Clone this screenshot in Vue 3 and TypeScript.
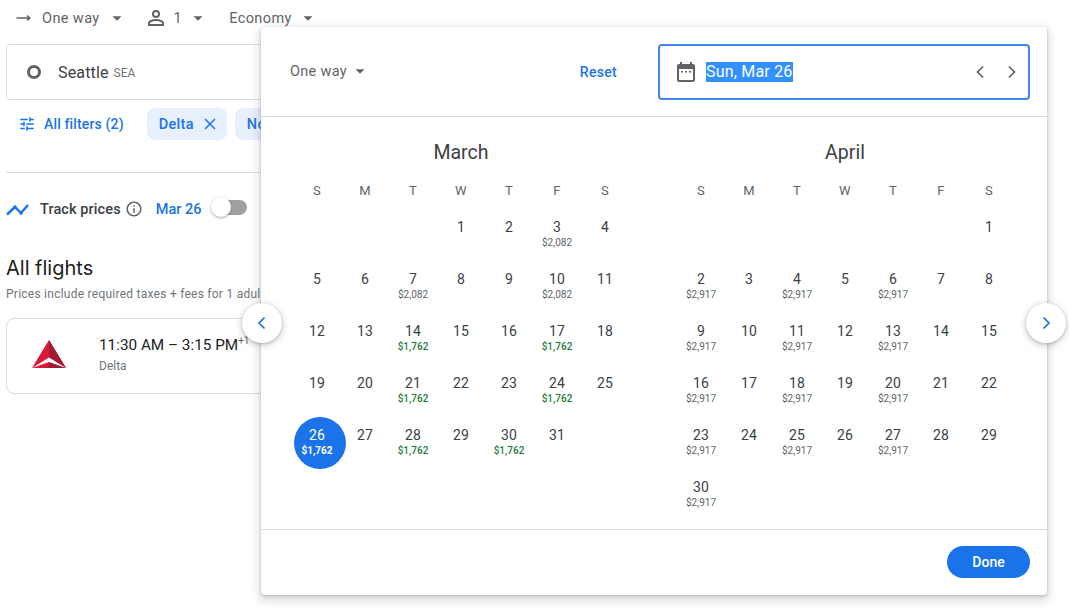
<script setup lang="ts">
interface Day {
  n: number
  price?: string
  low?: boolean
  selected?: boolean
}

interface Month {
  name: string
  offset: number
  days: Day[]
}

const weekdays = ['S', 'M', 'T', 'W', 'T', 'F', 'S']

function buildMonth(name: string, offset: number, total: number, prices: Record<number, string>): Month {
  const days: Day[] = []
  for (let n = 1; n <= total; n++) {
    const price = prices[n]
    days.push({ n, price, low: price === '$1,762', selected: name === 'March' && n === 26 })
  }
  return { name, offset, days }
}

const low = '$1,762'
const mid = '$2,082'
const high = '$2,917'

const months: Month[] = [
  buildMonth('March', 3, 31, {
    3: mid, 7: mid, 10: mid, 14: low, 17: low, 21: low, 24: low, 26: low, 28: low, 30: low,
  }),
  buildMonth('April', 6, 30, {
    2: high, 4: high, 6: high, 9: high, 11: high, 13: high, 16: high, 18: high, 20: high,
    23: high, 25: high, 27: high, 30: high,
  }),
]
</script>

<template>
  <div class="page">
    <div class="topbar">
      <div class="pick first">
        <svg width="16" height="16" viewBox="0 0 16 16" class="arrow">
          <path d="M0.5 8h13M11 5.6 13.8 8 11 10.4" fill="none" stroke="#5f6368" stroke-width="1.5" />
        </svg>
        <span>One way</span>
        <i class="caret"></i>
      </div>
      <div class="pick people">
        <svg width="24" height="24" viewBox="0 0 24 24">
          <path
            fill="#5f6368"
            d="M12 5.900a2.100 2.100 0 1 1 0 4.200 2.100 2.100 0 0 1 0-4.200m0 9c2.970 0 6.100 1.460 6.100 2.100v1.100H5.900V17c0-.64 3.130-2.100 6.100-2.100M12 4a4 4 0 1 0 0 8 4 4 0 0 0 0-8zm0 9c-2.670 0-8 1.340-8 4v3h16v-3c0-2.660-5.330-4-8-4z"
          />
        </svg>
        <span>1</span>
        <i class="caret"></i>
      </div>
      <div class="pick economy">
        <span>Economy</span>
        <i class="caret"></i>
      </div>
    </div>

    <div class="origin">
      <span class="ring"></span>
      <span class="city">Seattle</span>
      <span class="code">SEA</span>
    </div>

    <div class="filters">
      <div class="all-filters">
        <svg width="18" height="18" viewBox="0 0 24 24">
          <path
            fill="#1a73e8"
            d="M3 17v2h6v-2H3zM3 5v2h10V5H3zm10 16v-2h8v-2h-8v-2h-2v6h2zM7 9v2H3v2h4v2h2V9H7zm14 4v-2H11v2h10zm-6-4h2V7h4V5h-4V3h-2v6z"
          />
        </svg>
        <span>All filters (2)</span>
      </div>
      <div class="chip">
        <span>Delta</span>
        <svg width="12" height="12" viewBox="0 0 12 12">
          <path d="M1 1l10 10M11 1 1 11" stroke="#1a73e8" stroke-width="1.500" fill="none" />
        </svg>
      </div>
      <div class="chip"><span>Nonstop</span></div>
    </div>

    <div class="divider"></div>

    <div class="track">
      <svg width="24" height="24" viewBox="0 0 24 24" class="trend">
        <path d="M1 17.500 9 10l6 6 7-8" fill="none" stroke="#1a73e8" stroke-width="2.400" />
        <circle cx="9" cy="10" r="1.700" fill="#1a73e8" />
        <circle cx="15" cy="16" r="1.700" fill="#1a73e8" />
      </svg>
      <span class="track-label">Track prices</span>
      <svg width="18" height="18" viewBox="0 0 24 24" class="info">
        <path
          fill="#5f6368"
          d="M11 7h2v2h-2zm0 4h2v6h-2zm1-9C6.480 2 2 6.480 2 12s4.480 10 10 10 10-4.480 10-10S17.520 2 12 2zm0 18c-4.410 0-8-3.590-8-8s3.590-8 8-8 8 3.590 8 8-3.590 8-8 8z"
        />
      </svg>
      <span class="track-date">Mar 26</span>
      <div class="switch"><span class="knob"></span></div>
    </div>

    <h2 class="heading">All flights</h2>
    <p class="sub">Prices include required taxes + fees for 1 adult.</p>

    <div class="flight">
      <svg width="34" height="28" viewBox="0 0 34 28" class="logo">
        <path d="M17 0 0 28h34z" fill="#d8193a" />
        <path d="M17 0 34 28H17z" fill="#a31a34" />
        <path d="M0 28 17 17.500 34 28 17 22z" fill="#fff" />
      </svg>
      <div class="flight-text">
        <div class="times">11:30 AM – 3:15 PM<sup>+1</sup></div>
        <div class="carrier">Delta</div>
      </div>
    </div>

    <div class="dialog">
      <header class="dialog-head">
        <div class="trip">
          <span>One way</span>
          <i class="caret"></i>
        </div>
        <span class="reset">Reset</span>
        <div class="date-field">
          <svg width="24" height="24" viewBox="0 0 24 24">
            <path
              fill="#5f6368"
              d="M19 4h-1V2h-2v2H8V2H6v2H5a2 2 0 0 0-2 2v14a2 2 0 0 0 2 2h14a2 2 0 0 0 2-2V6a2 2 0 0 0-2-2zm0 16H5V9h14v11zM7 11h2v1.500H7zm4 0h2v1.500h-2zm4 0h2v1.500h-2z"
            />
          </svg>
          <span class="date-value">Sun, Mar 26</span>
          <svg width="24" height="24" viewBox="0 0 24 24" class="step back">
            <path d="M15 6.500 9.500 12l5.500 5.500" fill="none" stroke="#5f6368" stroke-width="1.700" />
          </svg>
          <svg width="24" height="24" viewBox="0 0 24 24" class="step">
            <path d="M9 6.500 14.500 12 9 17.500" fill="none" stroke="#5f6368" stroke-width="1.700" />
          </svg>
        </div>
      </header>

      <div class="months">
        <section v-for="m in months" :key="m.name" class="month">
          <h3 class="month-name">{{ m.name }}</h3>
          <div class="week">
            <span v-for="(w, i) in weekdays" :key="i">{{ w }}</span>
          </div>
          <div class="grid">
            <span v-for="b in m.offset" :key="'b' + b"></span>
            <div v-for="d in m.days" :key="d.n" class="cell" :class="{ selected: d.selected }">
              <span class="num">{{ d.n }}</span>
              <span v-if="d.price" class="price" :class="{ low: d.low }">{{ d.price }}</span>
            </div>
          </div>
        </section>
      </div>

      <footer class="dialog-foot">
        <button class="done">Done</button>
      </footer>
    </div>

    <button class="nav nav-prev">
      <svg width="24" height="24" viewBox="0 0 24 24">
        <path d="M14.500 6.500 9 12l5.500 5.500" fill="none" stroke="#1a73e8" stroke-width="1.700" />
      </svg>
    </button>
    <button class="nav nav-next">
      <svg width="24" height="24" viewBox="0 0 24 24">
        <path d="M9.500 6.500 15 12l-5.500 5.500" fill="none" stroke="#1a73e8" stroke-width="1.700" />
      </svg>
    </button>
  </div>
</template>

<style>
html,
body {
  margin: 0;
  overflow: hidden;
  background: #fff;
}
</style>

<style scoped>
.page {
  position: relative;
  width: 1069px;
  height: 608px;
  overflow: hidden;
  box-sizing: border-box;
  padding: 0 40px 0 6px;
  font-family: Roboto, "Liberation Sans", sans-serif;
  color: #3c4043;
}

.caret {
  display: inline-block;
  width: 0;
  height: 0;
  border-left: 5px solid transparent;
  border-right: 5px solid transparent;
  border-top: 5px solid #5f6368;
  transform: scale(0.9);
}

.topbar {
  display: flex;
  align-items: center;
  height: 36px;
  font-size: 14.500px;
  color: #5f6368;
  letter-spacing: 0.4px;
}

.pick {
  display: flex;
  align-items: center;
}

.first {
  margin-left: 10px;
}

.first span {
  margin-left: 10px;
  margin-right: 12px;
}

.people {
  margin-left: 22px;
}

.people span {
  margin-left: 6px;
  margin-right: 11px;
}

.economy {
  margin-left: 26px;
}

.economy span {
  margin-right: 11px;
}

.origin {
  box-sizing: border-box;
  display: flex;
  align-items: center;
  height: 56px;
  margin-top: 8px;
  padding-left: 20px;
  border: 1px solid #dadce0;
  border-radius: 4px;
}

.ring {
  width: 8px;
  height: 8px;
  border: 3px solid #5f6368;
  border-radius: 50%;
  margin-right: 17px;
}

.city {
  font-size: 16px;
  letter-spacing: 0.15px;
  color: #3c4043;
}

.code {
  font-size: 12px;
  color: #70757a;
  margin-left: 5px;
  margin-top: 2px;
}

.filters {
  display: flex;
  align-items: center;
  height: 32px;
  margin-top: 8px;
  font-size: 14px;
  font-weight: 500;
  letter-spacing: 0.15px;
  color: #1a73e8;
}

.all-filters {
  display: flex;
  align-items: center;
  gap: 8px;
  margin-left: 12px;
  margin-right: 23px;
}

.chip {
  display: flex;
  align-items: center;
  gap: 10px;
  height: 32px;
  padding: 0 11px 0 12px;
  margin-right: 8px;
  border-radius: 8px;
  font-size: 14.500px;
  letter-spacing: 0.3px;
  background: #e8f0fe;
  white-space: nowrap;
}

.divider {
  height: 1px;
  margin-top: 32px;
  background: #dadce0;
}

.track {
  display: flex;
  align-items: center;
  height: 32px;
  margin-top: 20px;
  font-size: 14.500px;
}

.trend {
  margin-right: 10px;
  width: 24px;
}

.track-label {
  font-weight: 500;
  letter-spacing: 0.1px;
  color: #3c4043;
}

.info {
  margin-left: 4px;
}

.track-date {
  margin-left: 13px;
  color: #1a73e8;
  font-weight: 500;
}

.switch {
  position: relative;
  width: 30px;
  height: 15px;
  margin-left: 16px;
  margin-top: -4px;
  border-radius: 8px;
  background: #a0a0a0;
}

.knob {
  position: absolute;
  left: -6px;
  top: -3px;
  width: 20px;
  height: 20px;
  border-radius: 50%;
  background: #fff;
  box-shadow: 0 1px 3px rgba(60, 64, 67, 0.45);
}

.heading {
  margin: 30px 0 0;
  font-family: Inter, Roboto, sans-serif;
  font-size: 20px;
  line-height: 26px;
  font-weight: 400;
  color: #202124;
}

.sub {
  margin: 5px 0 0;
  font-size: 12px;
  line-height: 16px;
  color: #70757a;
  letter-spacing: 0.25px;
  white-space: nowrap;
}

.flight {
  box-sizing: border-box;
  display: flex;
  align-items: center;
  height: 76px;
  margin-top: 16px;
  padding: 0 0 4px 25px;
  border: 1px solid #dadce0;
  border-radius: 8px;
}

.flight-text {
  margin-left: 33px;
}

.times {
  font-size: 15.300px;
  line-height: 22px;
  color: #202124;
  white-space: nowrap;
}

.times sup {
  font-size: 10px;
  line-height: 0;
  color: #5f6368;
}

.carrier {
  margin-top: 2px;
  font-size: 12px;
  line-height: 16px;
  color: #70757a;
}

.dialog {
  position: absolute;
  left: 261px;
  top: 27px;
  width: 786px;
  height: 568px;
  display: flex;
  flex-direction: column;
  background: #fff;
  border-radius: 4px;
  box-shadow: 0 1px 3px rgba(60, 64, 67, 0.3), 0 4px 8px 3px rgba(60, 64, 67, 0.15);
}

.dialog-head {
  box-sizing: border-box;
  display: flex;
  align-items: center;
  height: 90px;
  flex-shrink: 0;
  padding: 0 17px 0 29px;
  border-bottom: 1px solid #dadce0;
}

.trip {
  display: flex;
  align-items: center;
  gap: 8px;
  font-size: 14.500px;
  color: #5f6368;
  letter-spacing: 0.3px;
}

.reset {
  margin-left: auto;
  margin-right: 41px;
  font-size: 14px;
  letter-spacing: 0.3px;
  font-weight: 500;
  color: #1a73e8;
}

.date-field {
  box-sizing: border-box;
  display: flex;
  align-items: center;
  width: 372px;
  height: 56px;
  padding: 0 4px 0 14px;
  border: 2px solid #4285f4;
  border-radius: 4px;
}

.date-value {
  margin-left: 8px;
  font-size: 16px;
  line-height: 20px;
  letter-spacing: 0.2px;
  color: #fff;
  background: #3390ff;
}

.step {
  margin-left: 8px;
}

.back {
  margin-left: auto;
}

.months {
  display: flex;
  flex: 1;
  gap: 48px;
  padding-left: 32px;
}

.month {
  width: 336px;
}

.month-name {
  margin: 24px 0 0;
  text-align: center;
  font-size: 19.500px;
  line-height: 24px;
  font-weight: 400;
  color: #3c4043;
}

.week {
  display: grid;
  grid-template-columns: repeat(7, 48px);
  margin-top: 18px;
  text-align: center;
  font-size: 13px;
  line-height: 16px;
  letter-spacing: 0.3px;
  color: #5f6368;
}

.grid {
  display: grid;
  grid-template-columns: repeat(7, 48px);
  grid-auto-rows: 52px;
  margin-top: 18px;
}

.cell {
  position: relative;
  display: flex;
  flex-direction: column;
  align-items: center;
}

.num {
  font-size: 14px;
  line-height: 20px;
  letter-spacing: 0.2px;
  color: #3c4043;
}

.price {
  font-size: 10px;
  line-height: 12px;
  color: #5f6368;
  white-space: nowrap;
}

.price.low {
  color: #188038;
  font-weight: 500;
}

.cell.selected::before {
  content: "";
  position: absolute;
  left: 1px;
  top: -8px;
  width: 52px;
  height: 52px;
  border-radius: 50%;
  background: #1a73e8;
}

.cell.selected .num,
.cell.selected .price {
  position: relative;
  color: #fff;
}

.cell.selected .price {
  font-weight: 700;
}

.dialog-foot {
  box-sizing: border-box;
  display: flex;
  align-items: center;
  justify-content: flex-end;
  height: 66px;
  flex-shrink: 0;
  padding: 0 17px 2px 0;
  border-top: 1px solid #dadce0;
}

.done {
  width: 83px;
  height: 32px;
  border: 0;
  border-radius: 16px;
  background: #1a73e8;
  color: #fff;
  font-family: inherit;
  font-size: 14px;
  font-weight: 500;
}

.nav {
  position: absolute;
  top: 303px;
  display: flex;
  align-items: center;
  justify-content: center;
  width: 40px;
  height: 40px;
  padding: 0;
  border: 0;
  border-radius: 50%;
  background: #fff;
  box-shadow: 0 1px 3px rgba(60, 64, 67, 0.3), 0 2px 6px 2px rgba(60, 64, 67, 0.15);
}

.nav-prev {
  left: 242px;
}

.nav-next {
  left: 1026px;
}
</style>
